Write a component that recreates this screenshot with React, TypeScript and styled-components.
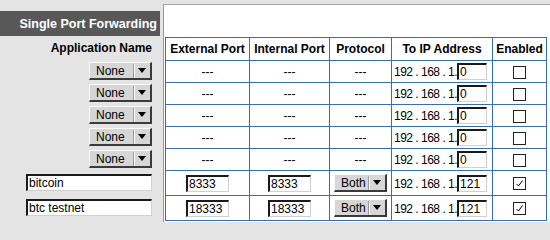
import styled, { createGlobalStyle } from "styled-components";

const GlobalStyle = createGlobalStyle`
  body {
    margin: 0;
    background: #e4e4e4;
    font-family: "Liberation Sans", Arial, sans-serif;
  }
`;

const Page = styled.div`
  display: flex;
  height: 222px;
  width: 550px;
  overflow: hidden;
  background: #e4e4e4;
`;

const Side = styled.div`
  width: 163px;
  flex-shrink: 0;
  padding-top: 11px;
  box-sizing: border-box;
`;

const TitleBar = styled.div`
  height: 25px;
  width: 160px;
  background: #585858;
  color: #fff;
  font-weight: bold;
  font-size: 12.5px;
  display: flex;
  align-items: center;
  justify-content: flex-end;
  padding-right: 3px;
  box-sizing: border-box;
`;

const SideRow = styled.div<{ h: number }>`
  height: ${(p) => p.h}px;
  display: flex;
  align-items: center;
  justify-content: flex-end;
  padding-right: 11px;
`;

const SideLabel = styled.span`
  font-weight: bold;
  font-size: 12px;
  color: #000;
`;

const Panel = styled.div`
  flex: 1;
  margin-top: 4px;
  background: #fff;
  border-top: 1px solid #a4a4a4;
  border-left: 1px solid #9a9a9a;
  padding: 32px 0 0 1px;
`;

const Table = styled.table`
  border-collapse: collapse;
  border: 1px solid #3a6ea5;
  font-size: 12px;
  color: #000;
  table-layout: fixed;
`;

const Row = styled.tr<{ h: number }>`
  height: ${(p) => p.h}px;
`;

const Head = styled.th<{ w: number }>`
  width: ${(p) => p.w}px;
  border: 1px solid #3a6ea5;
  font-weight: bold;
  font-size: 12px;
  padding: 0;
  text-align: center;
  white-space: nowrap;
`;

const Cell = styled.td<{ align?: string }>`
  border: 1px solid #3a6ea5;
  padding: ${(p) => (p.align === "left" ? "0 0 0 2px" : "0")};
  text-align: ${(p) => p.align || "center"};
  white-space: nowrap;
  overflow: hidden;
`;

const TextBox = styled.div<{ w: number }>`
  display: inline-flex;
  align-items: center;
  width: ${(p) => p.w}px;
  height: 17px;
  box-sizing: border-box;
  background: #fff;
  border-style: solid;
  border-width: 2px 1px 1px 2px;
  border-color: #1a1a1a #d0d0d0 #d0d0d0 #1a1a1a;
  padding-left: 1px;
  font-size: 12px;
  vertical-align: middle;
  text-align: left;
`;

const Select = styled.div<{ w: number }>`
  display: inline-flex;
  align-items: center;
  width: ${(p) => p.w}px;
  height: 18px;
  box-sizing: border-box;
  background: #d6d6d6;
  border-style: solid;
  border-width: 1px 2px 2px 1px;
  border-color: #fafafa #3a3a3a #3a3a3a #fafafa;
  font-size: 12px;
  vertical-align: middle;
`;

const SelectText = styled.span`
  flex: 1;
  padding-left: 6px;
  text-align: left;
`;

const SelectArrow = styled.span`
  width: 16px;
  height: 14px;
  display: flex;
  align-items: center;
  justify-content: center;
  border-left: 1px solid #9a9a9a;
  box-shadow: inset 1px 0 0 #fff;
`;

const IpText = styled.span`
  vertical-align: middle;
  letter-spacing: -0.5px;
`;

const Box = styled.span`
  display: inline-block;
  width: 13px;
  height: 13px;
  box-sizing: border-box;
  border: 1px solid #222;
  background: #fff;
  vertical-align: middle;
`;

const Arrow = () => (
  <svg width="8" height="5" viewBox="0 0 8 5">
    <path d="M0 0 H8 L4 5 Z" fill="#000" />
  </svg>
);

const Check = ({ on }: { on: boolean }) => (
  <Box>
    {on && (
      <svg width="11" height="11" viewBox="0 0 11 11" style={{ display: "block" }}>
        <path d="M2.5 6 L4.5 8 L8.5 2.5" fill="none" stroke="#000" strokeWidth="1" />
      </svg>
    )}
  </Box>
);

const Drop = ({ label, w }: { label: string; w: number }) => (
  <Select w={w}>
    <SelectText>{label}</SelectText>
    <SelectArrow>
      <Arrow />
    </SelectArrow>
  </Select>
);

type Entry = { name?: string; port?: string; last: string; on: boolean };

const entries: Entry[] = [
  { last: "0", on: false },
  { last: "0", on: false },
  { last: "0", on: false },
  { last: "0", on: false },
  { last: "0", on: false },
  { name: "bitcoin", port: "8333", last: "121", on: true },
  { name: "btc testnet", port: "18333", last: "121", on: true },
];

const rowH = (e: Entry) => (e.name ? 25 : 22);

export default function App() {
  return (
    <>
      <GlobalStyle />
      <Page>
        <Side>
          <TitleBar>Single Port Forwarding</TitleBar>
          <SideRow h={24}>
            <SideLabel>Application Name</SideLabel>
          </SideRow>
          {entries.map((e, i) => (
            <SideRow h={rowH(e)} key={i}>
              {e.name ? <TextBox w={126}>{e.name}</TextBox> : <Drop label="None" w={63} />}
            </SideRow>
          ))}
        </Side>
        <Panel>
          <Table>
            <tbody>
              <Row h={23}>
                <Head w={83}>External Port</Head>
                <Head w={79}>Internal Port</Head>
                <Head w={61}>Protocol</Head>
                <Head w={100}>To IP Address</Head>
                <Head w={53}>Enabled</Head>
              </Row>
              {entries.map((e, i) => (
                <Row h={rowH(e)} key={i}>
                  <Cell>{e.port ? <TextBox w={43}>{e.port}</TextBox> : "---"}</Cell>
                  <Cell>{e.port ? <TextBox w={43}>{e.port}</TextBox> : "---"}</Cell>
                  <Cell>{e.port ? <Drop label="Both" w={53} /> : "---"}</Cell>
                  <Cell align="left">
                    <IpText>192 . 168 . 1.</IpText>
                    <TextBox w={30}>{e.last}</TextBox>
                  </Cell>
                  <Cell>
                    <Check on={e.on} />
                  </Cell>
                </Row>
              ))}
            </tbody>
          </Table>
        </Panel>
      </Page>
    </>
  );
}
